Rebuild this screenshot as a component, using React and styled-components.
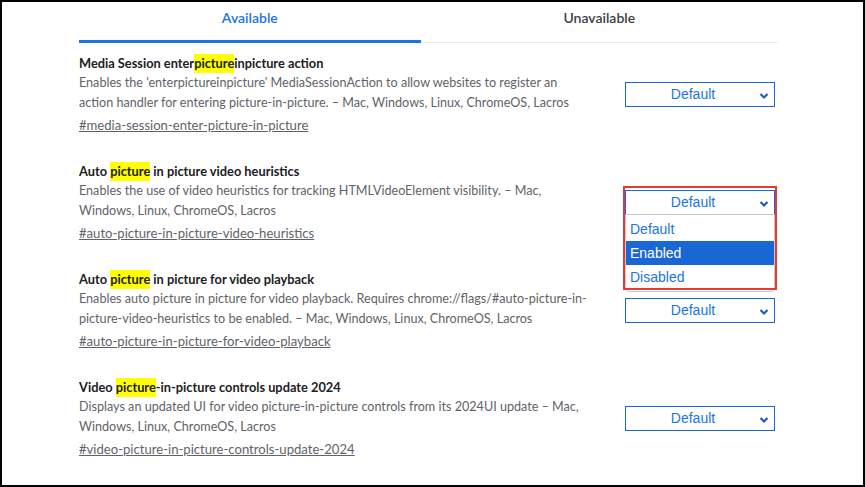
import React from "react";
import styled, { createGlobalStyle } from "styled-components";

const GlobalStyle = createGlobalStyle`
  html, body {
    margin: 0;
    padding: 0;
    background: #000;
  }
  * { box-sizing: border-box; }
`;

const flags = [
  {
    title: ["Media Session enter", "picture", "inpicture action"],
    lines: [
      "Enables the 'enterpictureinpicture' MediaSessionAction to allow websites to register an",
      "action handler for entering picture-in-picture. – Mac, Windows, Linux, ChromeOS, Lacros",
    ],
    link: "#media-session-enter-picture-in-picture",
  },
  {
    title: ["Auto ", "picture", " in picture video heuristics"],
    lines: [
      "Enables the use of video heuristics for tracking HTMLVideoElement visibility. – Mac,",
      "Windows, Linux, ChromeOS, Lacros",
    ],
    link: "#auto-picture-in-picture-video-heuristics",
    open: true,
  },
  {
    title: ["Auto ", "picture", " in picture for video playback"],
    lines: [
      "Enables auto picture in picture for video playback. Requires chrome://flags/#auto-picture-in-",
      "picture-video-heuristics to be enabled. – Mac, Windows, Linux, ChromeOS, Lacros",
    ],
    link: "#auto-picture-in-picture-for-video-playback",
  },
  {
    title: ["Video ", "picture", "-in-picture controls update 2024"],
    lines: [
      "Displays an updated UI for video picture-in-picture controls from its 2024UI update – Mac,",
      "Windows, Linux, ChromeOS, Lacros",
    ],
    link: "#video-picture-in-picture-controls-update-2024",
  },
];

export default function App() {
  return (
    <Frame>
      <GlobalStyle />
      <Page>
        <Tabs>
          <Tab $active>Available</Tab>
          <Tab>Unavailable</Tab>
        </Tabs>
        {flags.map((f) => (
          <Row key={f.link}>
            <Info>
              <Title>
                {f.title[0]}
                <Mark>{f.title[1]}</Mark>
                {f.title[2]}
              </Title>
              <Desc>
                {f.lines.map((l, i) => (
                  <Line key={i}>{l}</Line>
                ))}
              </Desc>
              <Permalink href={f.link}>{f.link}</Permalink>
            </Info>
            <SelectWrap>
              <Select>
                <span>Default</span>
                <Chevron viewBox="0 0 10 10">
                  <path d="M1.5 3 L5 6.5 L8.5 3" fill="none" stroke="#1a5cc4" strokeWidth="2.2" />
                </Chevron>
              </Select>
              {f.open && (
                <>
                  <Menu>
                    <Option>Default</Option>
                    <Option $selected>Enabled</Option>
                    <Option>Disabled</Option>
                  </Menu>
                  <Highlight />
                </>
              )}
            </SelectWrap>
          </Row>
        ))}
      </Page>
    </Frame>
  );
}

const Frame = styled.div`
  height: 100vh;
  border: 2px solid #000;
  background: #fff;
  overflow: hidden;
`;

const Page = styled.div`
  width: 699px;
  margin-left: 77px;
  font-family: "Segoe UI", Lato, "Noto Sans", sans-serif;
`;

const Tabs = styled.div`
  display: flex;
  height: 41px;
  border-bottom: 1px solid #e8eaed;
`;

const Tab = styled.div`
  flex: 1 1 auto;
  display: flex;
  align-items: center;
  justify-content: center;
  padding-bottom: 7px;
  font-size: 14px;
  font-weight: 600;
  color: ${(p) => (p.$active ? "#1a73e8" : "#3c4043")};
  border-bottom: 3px solid ${(p) => (p.$active ? "#1a73e8" : "transparent")};
  margin-bottom: -1px;
`;

const Row = styled.div`
  display: grid;
  grid-template-columns: 1fr 150px;
  column-gap: 20px;
  align-items: center;
  padding: 10px 3px 16px 0;
`;

const Info = styled.div`
  display: flex;
  flex-direction: column;
`;

const Title = styled.div`
  font-size: 12.8px;
  font-weight: 700;
  line-height: 20px;
  color: #202124;
`;

const Mark = styled.mark`
  background: #ffff00;
  color: inherit;
  padding: 1px 0 2px;
`;

const Desc = styled.div`
  font-size: 12.6px;
  line-height: 20px;
  color: #5f6368;
`;

const Line = styled.div`
  white-space: nowrap;
`;

const Permalink = styled.a`
  margin-top: 2px;
  font-size: 13.1px;
  line-height: 20px;
  color: #5f6368;
  text-decoration: underline;
  align-self: flex-start;
`;

const SelectWrap = styled.div`
  position: relative;
  width: 150px;
`;

const Select = styled.div`
  position: relative;
  height: 25px;
  padding-right: 14px;
  border: 1px solid #1967d2;
  display: flex;
  align-items: center;
  justify-content: center;
  font-family: "Liberation Sans", Arial, sans-serif;
  font-size: 14px;
  color: #1a73e8;
  background: #fff;
`;

const Chevron = styled.svg`
  position: absolute;
  right: 5px;
  top: 8px;
  width: 10px;
  height: 10px;
`;

const Menu = styled.div`
  position: absolute;
  left: 0;
  right: 0;
  top: 24px;
  padding: 2px 0;
  background: #fff;
  border: 1px solid #c8c8c8;
  border-radius: 0 0 4px 4px;
  z-index: 2;
`;

const Option = styled.div`
  height: 24px;
  line-height: 24px;
  padding-left: 4px;
  font-family: "Liberation Sans", Arial, sans-serif;
  font-size: 14px;
  color: ${(p) => (p.$selected ? "#fff" : "#1a73e8")};
  background: ${(p) => (p.$selected ? "#1967d2" : "transparent")};
`;

const Highlight = styled.div`
  position: absolute;
  left: -2px;
  right: -2px;
  top: -4px;
  height: 104px;
  border: 2px solid #e53935;
  pointer-events: none;
  z-index: 3;
`;
